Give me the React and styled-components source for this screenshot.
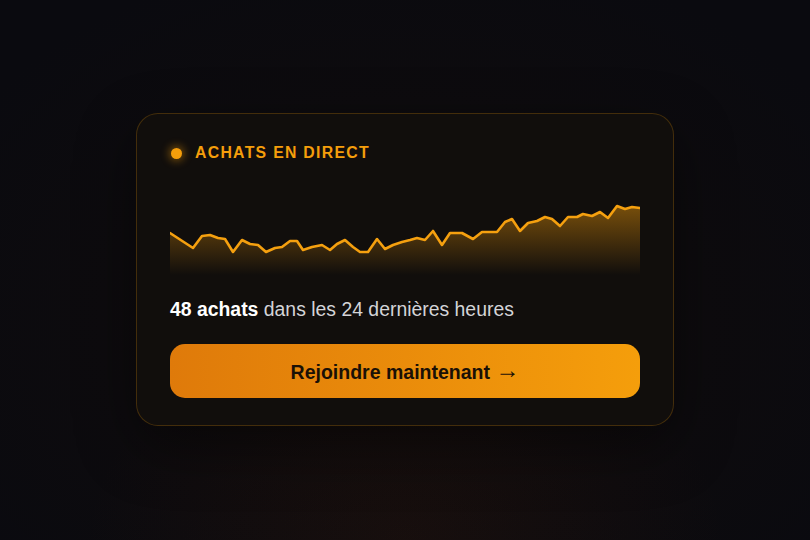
import styled, { createGlobalStyle } from "styled-components";

const GlobalStyle = createGlobalStyle`
  html, body { margin: 0; padding: 0; }
  body {
    background: #0a0a0f;
    font-family: "Liberation Sans", Arial, sans-serif;
  }
`;

const points = [
  [170, 233], [193, 248], [202, 236], [210, 235], [218, 238], [225, 239], [233, 252],
  [242, 240], [250, 244], [258, 245], [266, 252], [275, 248], [282, 247], [290, 241],
  [297, 241], [303, 250], [312, 247], [322, 245], [330, 250], [337, 244], [345, 240],
  [353, 247], [360, 252], [368, 252], [377, 239], [385, 249], [393, 245], [402, 242],
  [410, 240], [417, 238], [425, 240], [433, 231], [442, 245], [450, 233], [462, 233],
  [473, 239], [482, 232], [497, 232], [505, 222], [512, 219], [520, 231], [528, 223],
  [537, 221], [545, 217], [552, 219], [560, 226], [568, 217], [577, 217], [583, 214],
  [592, 216], [600, 212], [608, 218], [617, 206], [625, 209], [632, 207], [640, 208],
];

const CHART_TOP = 195;
const CHART_H = 80;

const Page = styled.div`
  min-height: 540px;
  display: flex;
  align-items: flex-start;
  justify-content: center;
  padding-top: 113px;
  box-sizing: border-box;
  background:
    radial-gradient(ellipse 320px 220px at 50% 100%, rgba(110, 45, 10, 0.1), rgba(0, 0, 0, 0) 100%),
    radial-gradient(ellipse 520px 380px at 50% 60%, rgba(28, 16, 8, 0.4), rgba(0, 0, 0, 0) 100%),
    #0a0a0f;
`;

const Card = styled.div`
  width: 538px;
  box-sizing: border-box;
  padding: 31px 33px 27px;
  border-radius: 22px;
  border: 1px solid rgba(245, 158, 11, 0.22);
  background: #110e0c;
  box-shadow: 0 20px 60px rgba(0, 0, 0, 0.45);
  display: flex;
  flex-direction: column;
`;

const Header = styled.div`
  display: flex;
  align-items: center;
  gap: 13px;
  height: 16px;
`;

const Dot = styled.span`
  width: 11px;
  height: 11px;
  margin-left: 1px;
  border-radius: 50%;
  background: #f59e0b;
  box-shadow: 0 0 8px 2px rgba(245, 158, 11, 0.45);
`;

const Label = styled.span`
  color: #f59e0b;
  font-size: 15.8px;
  font-weight: 700;
  letter-spacing: 1.3px;
  text-transform: uppercase;
`;

const Chart = styled.svg`
  display: block;
  width: 470px;
  height: ${CHART_H}px;
  margin-top: 34px;
`;

const Stat = styled.p`
  margin: 22px 0 0;
  font-size: 19.4px;
  line-height: 24px;
  color: #d4d4d8;

  strong {
    color: #ffffff;
    font-weight: 700;
  }
`;

const JoinButton = styled.button`
  margin-top: 23px;
  height: 54px;
  border: none;
  border-radius: 15px;
  background: linear-gradient(90deg, #df7a0a 0%, #f59e0b 100%);
  color: #1a1006;
  font-family: "Liberation Sans", Arial, sans-serif;
  font-size: 19.5px;
  font-weight: 700;
  line-height: 24px;
  cursor: pointer;
`;

const Arrow = styled.span`
  font-family: "Liberation Sans", Arial, sans-serif;
  font-weight: 400;
  font-size: 24px;
  vertical-align: 1px;
`;

function Sparkline() {
  const pts = points.map(([x, y]) => [x - 170, y - CHART_TOP]);
  const line = pts.map(([x, y], i) => `${i ? "L" : "M"}${x} ${y}`).join(" ");
  const area = `${line} L470 ${CHART_H} L0 ${CHART_H} Z`;
  return (
    <Chart viewBox={`0 0 470 ${CHART_H}`} preserveAspectRatio="none">
      <defs>
        <linearGradient id="fillGrad" x1="0" y1="0" x2="0" y2="1">
          <stop offset="0%" stopColor="#f59e0b" stopOpacity="0.45" />
          <stop offset="100%" stopColor="#f59e0b" stopOpacity="0" />
        </linearGradient>
      </defs>
      <path d={area} fill="url(#fillGrad)" />
      <path d={line} fill="none" stroke="#f5a00f" strokeWidth="2.6" strokeLinejoin="round" strokeLinecap="round" />
    </Chart>
  );
}

export default function App() {
  return (
    <>
      <GlobalStyle />
      <Page>
        <Card>
          <Header>
            <Dot />
            <Label>Achats en direct</Label>
          </Header>
          <Sparkline />
          <Stat>
            <strong>48 achats</strong> dans les 24 dernières heures
          </Stat>
          <JoinButton>
            Rejoindre maintenant <Arrow>→</Arrow>
          </JoinButton>
        </Card>
      </Page>
    </>
  );
}
